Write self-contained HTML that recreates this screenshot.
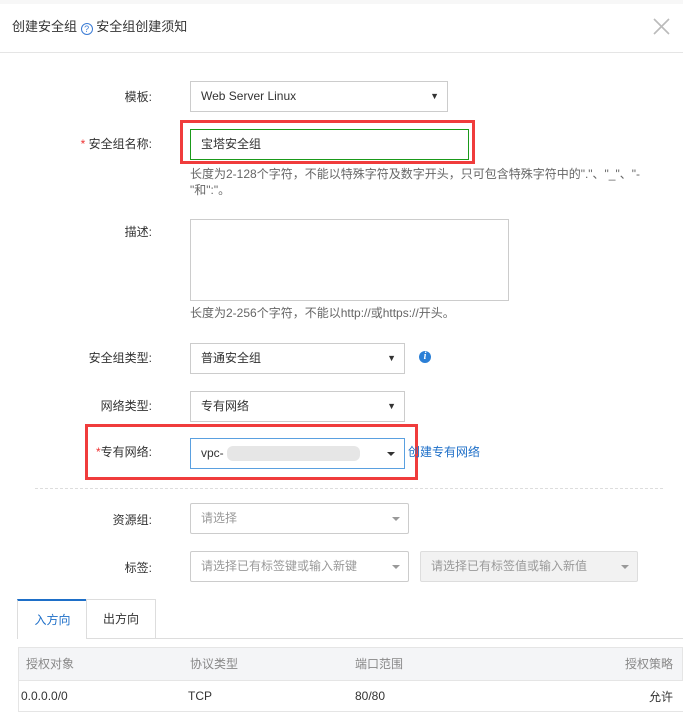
<!DOCTYPE html>
<html><head><meta charset="utf-8"><style>
*{box-sizing:border-box;margin:0;padding:0}
body{width:683px;height:717px;overflow:hidden;background:#fff;font-family:"Liberation Sans","Noto Sans CJK SC",sans-serif;font-size:12px;color:#333;position:relative}
.a{position:absolute;white-space:nowrap}
.t{line-height:14px}
.lbl{position:absolute;right:531px;text-align:right;color:#333;font-size:12px;line-height:14px;white-space:nowrap}
.sel{position:absolute;border:1px solid #ccc;background:#fff;height:31px;line-height:29px;padding-left:10px;font-size:12px;color:#333;white-space:nowrap}
.arr{position:absolute;right:8px;top:0;font-size:9px;color:#333}
.ph{color:#999}
.help{position:absolute;left:190px;font-size:12px;color:#666;line-height:16px;white-space:nowrap}
.caret{position:absolute;right:8px;top:13px;width:0;height:0;border-left:4px solid transparent;border-right:4px solid transparent;border-top:4px solid #999}
</style></head><body>
<div class="a" style="left:0;top:0;width:683px;height:4px;background:#f7f7f7"></div>
<div class="a" style="left:12px;top:18px;font-size:13px;color:#333;line-height:18px">创建安全组 <span style="display:inline-block;width:12px;height:12px;border:1px solid #3a7bd5;border-radius:50%;color:#3a7bd5;font-size:9px;line-height:10px;text-align:center;vertical-align:-1px">?</span> 安全组创建须知</div>
<svg class="a" style="left:653px;top:18px" width="17" height="17"><path d="M1 1L16 16M16 1L1 16" stroke="#bbb" stroke-width="1.6"/></svg>
<div class="a" style="left:0;top:52px;width:683px;height:1px;background:#e5e5e5"></div>

<div class="lbl" style="top:90px">模板:</div>
<div class="sel" style="left:190px;top:81px;width:258px">Web Server Linux<span class="arr">▼</span></div>

<div class="a" style="left:180px;top:120px;width:295px;height:44px;border:3px solid #f03c3c"></div>
<div class="lbl" style="top:137px"><span style="color:#e33">* </span>安全组名称:</div>
<div class="sel" style="left:190px;top:129px;width:279px;border-color:#1a9a1a">宝塔安全组</div>
<div class="help" style="top:166px">长度为2-128个字符，不能以特殊字符及数字开头，只可包含特殊字符中的"."、"_"、"-<br>"和":"。</div>

<div class="lbl" style="top:225px">描述:</div>
<div class="a" style="left:190px;top:219px;width:319px;height:82px;border:1px solid #ccc"></div>
<div class="help" style="top:305px">长度为2-256个字符，不能以http://或https://开头。</div>

<div class="lbl" style="top:351px">安全组类型:</div>
<div class="sel" style="left:190px;top:343px;width:215px">普通安全组<span class="arr">▼</span></div>
<div class="a" style="left:419px;top:351px;width:12px;height:12px;border-radius:50%;background:#2b7fd6;color:#fff;font-size:10px;font-weight:bold;font-style:italic;text-align:center;line-height:12px;font-family:'Liberation Serif',serif">i</div>

<div class="lbl" style="top:399px">网络类型:</div>
<div class="sel" style="left:190px;top:391px;width:215px">专有网络<span class="arr">▼</span></div>

<div class="a" style="left:85px;top:424px;width:333px;height:56px;border:3px solid #f03c3c"></div>
<div class="lbl" style="top:445px"><span style="color:#e33">*</span>专有网络:</div>
<div class="sel" style="left:190px;top:438px;width:215px;border-color:#5aa0e0">vpc-<span class="a" style="left:36px;top:7px;width:133px;height:15px;background:#e6e6e6;border-radius:6px"></span><span class="a" style="right:9px;top:13px;border-left:4px solid transparent;border-right:4px solid transparent;border-top:4px solid #333"></span></div>
<div class="a t" style="left:408px;top:445px;color:#1e6fc8;font-size:12px">创建专有网络</div>

<div class="a" style="left:35px;top:488px;width:628px;border-top:1px dashed #ddd"></div>

<div class="lbl" style="top:513px">资源组:</div>
<div class="sel" style="left:190px;top:503px;width:219px;border-radius:2px"><span class="ph">请选择</span><span class="caret"></span></div>

<div class="lbl" style="top:561px">标签:</div>
<div class="sel" style="left:190px;top:551px;width:219px;border-radius:2px"><span class="ph">请选择已有标签键或输入新键</span><span class="caret"></span></div>
<div class="sel" style="left:420px;top:551px;width:218px;background:#f2f2f2;border-color:#ddd;border-radius:2px"><span class="ph">请选择已有标签值或输入新值</span><span class="caret"></span></div>

<div class="a" style="left:17px;top:638px;width:666px;height:1px;background:#ddd"></div>
<div class="a" style="left:17px;top:599px;width:70px;height:40px;border-top:2px solid #1e6fc8;border-left:1px solid #ddd;background:#fff;text-align:center;line-height:38px;color:#1e6fc8">入方向</div>
<div class="a" style="left:86px;top:599px;width:70px;height:40px;border:1px solid #ddd;border-bottom:none;text-align:center;line-height:38px;color:#333">出方向</div>

<div class="a" style="left:18px;top:647px;width:665px;height:34px;background:#f4f5f7;border:1px solid #e5e5e5"></div>
<div class="a t" style="left:26px;top:657px;color:#888">授权对象</div>
<div class="a t" style="left:190px;top:657px;color:#888">协议类型</div>
<div class="a t" style="left:355px;top:657px;color:#888">端口范围</div>
<div class="a t" style="left:625px;top:657px;color:#888">授权策略</div>
<div class="a" style="left:18px;top:681px;width:665px;height:31px;border-left:1px solid #e5e5e5;border-bottom:1px solid #e5e5e5"></div>
<div class="a t" style="left:21px;top:689px">0.0.0.0/0</div>
<div class="a t" style="left:188px;top:689px">TCP</div>
<div class="a t" style="left:355px;top:689px">80/80</div>
<div class="a t" style="left:649px;top:690px">允许</div>
</body></html>
